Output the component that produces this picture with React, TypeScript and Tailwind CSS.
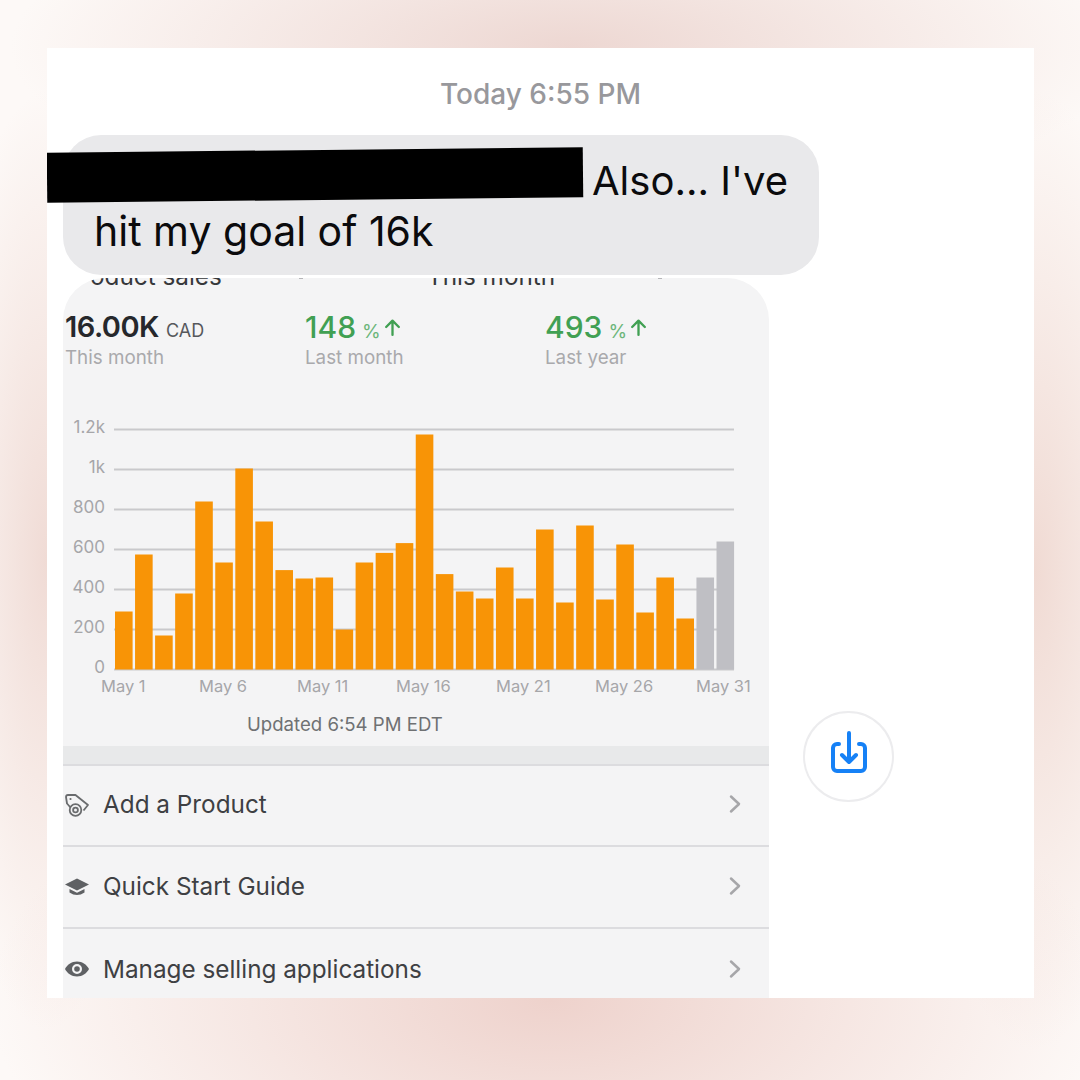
import React from "react";

const bars = [
  290, 575, 170, 380, 840, 535, 1005, 740, 497, 455, 460, 200, 535, 583, 632,
  1175, 477, 390, 355, 510, 355, 700, 335, 720, 350, 625, 285, 460, 255, 460, 640,
];
const yLabels = ["1.2k", "1k", "800", "600", "400", "200", "0"];
const xLabels = [
  { text: "May 1", x: 38 },
  { text: "May 6", x: 136 },
  { text: "May 11", x: 234 },
  { text: "May 16", x: 333 },
  { text: "May 21", x: 433 },
  { text: "May 26", x: 532 },
  { text: "May 31", x: 633 },
];

function Chart() {
  return (
    <svg width="706" height="280" viewBox="0 0 706 280" className="block overflow-visible" style={{ fontFamily: "Inter, sans-serif" }}>
      {yLabels.map((label, i) => (
        <g key={label}>
          <line
            x1="51"
            x2="671"
            y1={9.5 + i * 40}
            y2={9.5 + i * 40}
            stroke="#c9c9cc"
            strokeWidth="2"
          />
          <text x="42" y={13 + i * 40} textAnchor="end" fontSize="17" fill="#a6a6a9">
            {label}
          </text>
        </g>
      ))}
      {bars.map((value, i) => (
        <rect
          key={i}
          x={52 + i * 20.05}
          y={249.5 - value * 0.2}
          width="17.6"
          height={value * 0.2}
          fill={i >= 29 ? "#bfbfc4" : "#f89406"}
        />
      ))}
      {xLabels.map((l) => (
        <text key={l.text} x={l.x} y="272" fontSize="16.5" fill="#a6a6a9">
          {l.text}
        </text>
      ))}
    </svg>
  );
}

function Stat({ value, unit, label, green }: { value: string; unit?: string; label: string; green?: boolean }) {
  return (
    <div className="w-[240px] shrink-0">
      <div className="flex items-baseline h-[34px]">
        {green ? (
          <>
            <span className="text-[30px] font-medium text-[#41a053]">{value}</span>
            <span className="ml-[6px] text-[19px] text-[#6cb67a]">%</span>
            <svg width="17" height="19" viewBox="0 0 16 18" className="ml-[3px] self-center mt-[11px]" fill="none" stroke="#41a053" strokeWidth="2.2" strokeLinecap="round" strokeLinejoin="round">
              <path d="M8 16V2.5M2 8.5l6-6 6 6" />
            </svg>
          </>
        ) : (
          <>
            <span className="text-[29px] font-semibold text-[#26282c] tracking-[-0.5px]">{value}</span>
            <span className="ml-[7px] text-[18px] text-[#56585c]">{unit}</span>
          </>
        )}
      </div>
      <div className="text-[18.8px] leading-[22px] text-[#a9a9ac] mt-[8px]">{label}</div>
    </div>
  );
}

function TagIcon() {
  return (
    <svg width="26" height="26" viewBox="0 0 26 26" fill="none" stroke="#6a6c6e" strokeWidth="1.8" strokeLinejoin="round">
      <path d="M4 4h7.500l12.500 10-4.500 5.500" />
      <path d="M4 4q-2 0-2 2l1 6.500 3.500 4" />
      <circle cx="6.500" cy="8" r="1.100" fill="#6a6c6e" stroke="none" />
      <circle cx="11.500" cy="19" r="5.800" />
      <circle cx="11.500" cy="19" r="2.400" />
    </svg>
  );
}

function CapIcon() {
  return (
    <svg width="26" height="26" viewBox="0 0 26 26" fill="#5f6164">
      <path d="M13 5.500 L25 11.500 L13 17.500 L1 11.500 Z" />
      <path d="M5.500 16 L13 19.800 L20.500 16 V19.500 Q13 24.500 5.500 19.500 Z" />
    </svg>
  );
}

function EyeIcon() {
  return (
    <svg width="26" height="26" viewBox="0 0 26 26" fill="#5f6164">
      <path
        fillRule="evenodd"
        d="M13 5.500C7.500 5.500 3 9 1 13c2 4 6.500 7.500 12 7.500S23 17 25 13c-2-4-6.500-7.500-12-7.500Zm0 2.500a5 5 0 1 1 0 10 5 5 0 0 1 0-10Z"
      />
      <circle cx="13" cy="13" r="2.800" />
    </svg>
  );
}

function Row({ icon, label, last }: { icon: React.ReactNode; label: string; last?: boolean }) {
  return (
    <div className={`flex items-center h-[82px] pb-[2px] ${last ? "" : "border-b-2 border-[#dcdcdf]"}`}>
      <div className="w-[27px] ml-[1px] mr-[12px] shrink-0">{icon}</div>
      <span className="flex-1 text-[24.3px] text-[#3e4043]">{label}</span>
      <svg width="14" height="20" viewBox="0 0 14 20" className="mr-[27px]" fill="none" stroke="#a6a6a9" strokeWidth="2.500" strokeLinecap="round" strokeLinejoin="round">
        <path d="M3 2.500l8 7.500-8 7.500" />
      </svg>
    </div>
  );
}

export default function App() {
  return (
    <div
      className="w-[1080px] h-[1080px] pt-[48px] pl-[47px] overflow-hidden"
      style={{
        fontFamily: "Inter, sans-serif",
        background:
          "radial-gradient(ellipse 560px 170px at 570px 48px, #edd7d2, transparent), radial-gradient(ellipse 560px 280px at 550px 1000px, #eed2cc, transparent), radial-gradient(ellipse 110px 470px at 47px 560px, #f0dbd5, transparent), radial-gradient(ellipse 130px 480px at 1034px 570px, #f0dad3, transparent), #fdf9f7",
      }}
    >
      <div className="relative w-[987px] h-[950px] bg-white overflow-hidden">
        <div className="pt-[28px] h-[87px] text-center text-[28px] leading-[36px] text-[#98989c] font-medium">
          Today 6:55 PM
        </div>

        <div className="relative z-10 ml-[16px] w-[756px] h-[140px] rounded-[38px] bg-[#e9e9eb] pl-[31px] pt-[20px] text-[#0b0b0d]">
          <div className="pl-[498px] whitespace-nowrap text-[40px] leading-[51px]">Also... I've</div>
          <div className="text-[41px] leading-[51px] whitespace-nowrap">hit my goal of 16k</div>
        </div>

        {/* redaction bar */}
        <div className="absolute z-20 left-0 top-[102px] w-[536px] h-[50px] bg-black -rotate-[0.6deg]" />

        <div className="flex">
          <div className="relative mt-[3px] ml-[16px] w-[706px] h-[720px] rounded-t-[42px] bg-[#f4f4f5] overflow-hidden">
            <div className="absolute left-0 right-0 top-[-14px] h-[24px]">
              <span className="absolute left-[27px] text-[24.3px] leading-[24px] text-[#36383b]">oduct sales</span>
              <span className="absolute left-[364px] text-[24.3px] leading-[24px] text-[#36383b]">This month</span>
            </div>
            <div className="absolute left-[236px] top-0 w-[4px] h-[1px] bg-[#b5b5b8]" />
            <div className="absolute left-[595px] top-0 w-[4px] h-[1px] bg-[#b5b5b8]" />

            <div className="flex pl-[2px] pt-[27px] h-[142px]">
              <Stat value="16.00K" unit="CAD" label="This month" />
              <Stat value="148" label="Last month" green />
              <Stat value="493" label="Last year" green />
            </div>

            <Chart />

            <div className="pl-[184px] h-[47px] pt-[12px] text-[18.6px] leading-[24px] text-[#6f7173]">
              Updated 6:54 PM EDT
            </div>
            <div className="h-[20px] bg-[#e8e9ea] border-b-2 border-[#dcdcdf] mt-[-1px]" />

            <div className="mt-[-1px]">
              <Row icon={<TagIcon />} label="Add a Product" />
              <Row icon={<CapIcon />} label="Quick Start Guide" />
              <Row icon={<EyeIcon />} label="Manage selling applications" last />
            </div>
          </div>

          <div className="ml-[34px] mt-[436px] w-[91px] h-[91px] rounded-full border-2 border-[#ececee] bg-white flex items-center justify-center">
            <svg width="40" height="46" viewBox="0 0 40 46" className="mb-[8px]" fill="none" stroke="#1681f6" strokeWidth="4" strokeLinecap="round" strokeLinejoin="round">
              <path d="M10 14H8a4 4 0 0 0-4 4v19a4 4 0 0 0 4 4h24a4 4 0 0 0 4-4V18a4 4 0 0 0-4-4h-2" />
              <path d="M20 3v29M13 25l7 7 7-7" />
            </svg>
          </div>
        </div>
      </div>
    </div>
  );
}
